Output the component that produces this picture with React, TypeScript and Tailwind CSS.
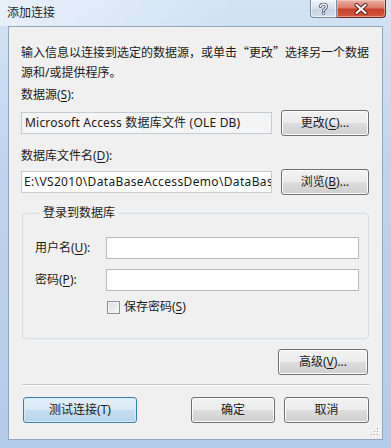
import React from "react";

const btn =
  "h-[26px] rounded-[3px] border border-[#707070] bg-[linear-gradient(#f2f2f2_0%,#ebebeb_50%,#dddddd_51%,#cfcfcf_100%)] shadow-[inset_0_0_0_1px_#fcfcfc] flex items-center justify-center text-[12px] text-[#1b1b1b]";
const btnDefault =
  "h-[26px] rounded-[3px] border border-[#3c7fb1] bg-[linear-gradient(#e3f0f9_0%,#d7e9f5_50%,#c6def0_51%,#b6d4ea_100%)] shadow-[inset_0_0_0_1px_#d2ecfa] flex items-center justify-center text-[12px] text-[#1b1b1b]";
const input = "h-[22px] border border-[#b5bec8] bg-white";

function U({ c }: { c: string }) {
  return <span className="underline underline-offset-[2px]">{c}</span>;
}

export default function App() {
  return (
    <div className="w-[391px] h-[448px] flex flex-col bg-[linear-gradient(to_bottom,#d3e3f4,#bed4ec_40%,#b3cbe8)] font-['Noto_Sans','Noto_Sans_CJK_SC',sans-serif] text-[12px] text-[#1b1b1b] overflow-hidden relative">
      {/* title bar */}
      <div className="h-[26px] flex items-start justify-between pl-[7px] pr-[5px] bg-[linear-gradient(100deg,rgba(255,255,255,0.5)_0%,rgba(255,255,255,0.2)_35%,rgba(255,255,255,0)_60%)]">
        <div className="pt-[4px] leading-[18px] text-[12px] text-[#1e1e1e]">添加连接</div>
        <div className="flex">
          <div className="w-[27px] h-[18px] rounded-bl-[4px] border border-t-0 border-[#7b8ca3] bg-[linear-gradient(#eef3f9,#d6e1ee_50%,#c3d2e4_51%,#d3dfec)] flex items-center justify-center shadow-[inset_0_0_0_1px_rgba(255,255,255,0.6)]">
            <svg width="9" height="12" viewBox="0 0 9 12">
              <path d="M1.5 3.5 C1.5 0.5 7.5 0.5 7.5 3.5 C7.5 5.5 4.5 5.5 4.5 8" fill="none" stroke="#4a5568" strokeWidth="3" strokeLinecap="round" />
              <path d="M1.5 3.5 C1.5 0.5 7.5 0.5 7.5 3.5 C7.5 5.5 4.5 5.5 4.5 8" fill="none" stroke="#f4f6f9" strokeWidth="1.4" strokeLinecap="round" />
              <circle cx="4.5" cy="10.6" r="1.3" fill="#f4f6f9" stroke="#4a5568" strokeWidth="0.8" />
            </svg>
          </div>
          <div className="w-[49px] h-[18px] rounded-br-[4px] border border-t-0 border-l-0 border-[#6e2b25] bg-[linear-gradient(#eab1a5,#dc7b68_45%,#c8412c_55%,#d55a3f)] flex items-center justify-center shadow-[inset_0_0_0_1px_rgba(255,220,210,0.5)]">
            <svg width="14" height="12" viewBox="0 0 14 12">
              <path d="M2.5 2 L11.5 10 M11.5 2 L2.5 10" stroke="#5a1f18" strokeWidth="4" strokeLinecap="round" />
              <path d="M2.5 2 L11.5 10 M11.5 2 L2.5 10" stroke="#ffffff" strokeWidth="2.2" strokeLinecap="round" />
            </svg>
          </div>
        </div>
      </div>

      {/* client */}
      <div className="mx-[8px] mb-[8px] flex-1 border border-[#8fa7c3] bg-[#f0f0f0] flex flex-col pl-[12px] pr-[13px] pt-[15px] relative">
        <p className="leading-[20px] -mr-[6px] whitespace-nowrap">
          输入信息以连接到选定的数据源，或单击
          <span className="font-['Noto_Sans_CJK_SC',sans-serif]">“更改”</span>
          选择另一个数据
          <br />
          源和/或提供程序。
        </p>
        <div className="mt-[2px] leading-[20px]">
          数据源(<U c="S" />):
        </div>
        <div className="mt-[5px] flex items-center justify-between">
          <div className="w-[251px] h-[22px] border border-[#c4ccd5] bg-[#f4f4f4] flex items-center pl-[3px] whitespace-nowrap overflow-hidden tracking-[0.2px]">
            Microsoft Access 数据库文件 (OLE DB)
          </div>
          <div className={btn + " w-[88px]"}>
            更改(<U c="C" />)...
          </div>
        </div>
        <div className="mt-[10px] leading-[20px]">
          数据库文件名(<U c="D" />):
        </div>
        <div className="mt-[3px] flex items-center justify-between">
          <div className="w-[251px] h-[22px] border border-[#c4ccd5] bg-white pl-[2px] whitespace-nowrap overflow-hidden leading-[20px] tracking-[0.35px]">
            E:\VS2010\DataBaseAccessDemo\DataBas
          </div>
          <div className={btn + " w-[88px]"}>
            浏览(<U c="B" />)...
          </div>
        </div>

        <fieldset className="mt-[10px] ml-[1px] border border-[#d5dde5] rounded-[3px] pl-[12px] pr-[9px] pb-[23px]">
          <legend className="ml-[5px] px-[3px] leading-[16px]">登录到数据库</legend>
          <div className="mt-[16px] flex items-center">
            <div className="w-[71px]">
              用户名(<U c="U" />):
            </div>
            <div className={input + " flex-1"} />
          </div>
          <div className="mt-[10px] flex items-center">
            <div className="w-[71px]">
              密码(<U c="P" />):
            </div>
            <div className={input + " flex-1"} />
          </div>
          <div className="mt-[8px] flex items-center pl-[72px] h-[16px]">
            <div className="w-[13px] h-[13px] border border-[#8e8f8f] bg-[linear-gradient(135deg,#dcdcdc,#f8f8f8)] shadow-[inset_0_0_0_1px_#f4f4f4]" />
            <div className="ml-[4px] leading-[16px]">
              保存密码(<U c="S" />)
            </div>
          </div>
        </fieldset>

        <div className="mt-[10px] flex justify-end">
          <div className={btn + " w-[90px] mr-[1px]"}>
            高级(<U c="V" />)...
          </div>
        </div>
        <div className="mt-[9px] ml-[1px] -mr-[1px] h-[2px] border-t border-[#c8c8c8] border-b border-b-white" />
        <div className="mt-[11px] flex items-center">
          <div className={btnDefault + " w-[114px] ml-[2px]"}>测试连接(T)</div>
          <div className="flex-1" />
          <div className={btn + " w-[84px]"}>确定</div>
          <div className={btn + " w-[85px] ml-[9px]"}>取消</div>
        </div>

        <svg className="absolute right-[2px] bottom-[2px]" width="10" height="10" viewBox="0 0 10 10">
          {[
            [8, 2],
            [8, 5],
            [5, 5],
            [8, 8],
            [5, 8],
            [2, 8],
          ].map(([x, y], i) => (
            <g key={i}>
              <rect x={x} y={y} width="1" height="1" fill="#ffffff" />
              <rect x={x - 1} y={y - 1} width="1" height="1" fill="#a0a0a0" />
            </g>
          ))}
        </svg>
      </div>
    </div>
  );
}
